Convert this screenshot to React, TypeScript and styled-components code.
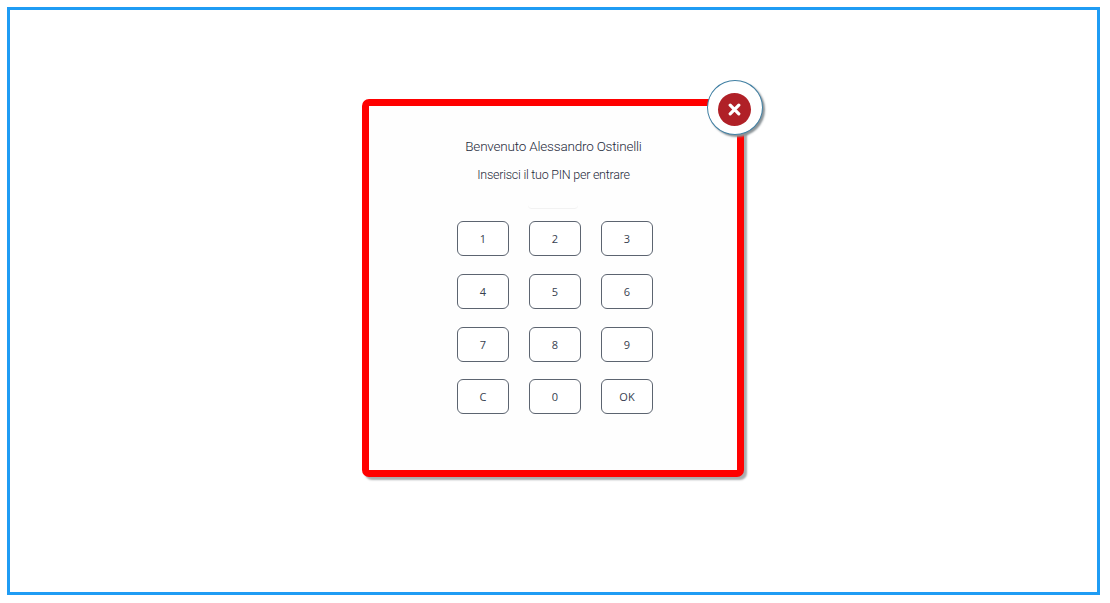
import styled, { createGlobalStyle } from 'styled-components';

const GlobalStyle = createGlobalStyle`
	html, body {
		margin: 0;
		padding: 0;
		background: #fff;
		font-family: Roboto, 'Noto Sans', sans-serif;
	}
`;

const Frame = styled.main`
	box-sizing: border-box;
	width: 1093px;
	height: 588px;
	margin: 7px 0 0 7px;
	padding: 89px 1px 0 0;
	border: 3px solid #1f9cf4;
	display: flex;
	justify-content: center;
	align-items: flex-start;
`;

const Card = styled.section`
	position: relative;
	box-sizing: border-box;
	width: 382px;
	height: 378px;
	border: 7px solid #ff0000;
	border-radius: 7px;
	background: #fefefe;
	box-shadow: 3px 3px 2px #a9acae;
	display: flex;
	flex-direction: column;
	align-items: center;
	padding-top: 30px;
	color: #4a5568;
`;

const Title = styled.h1`
	margin: 0 0 0 1px;
	font-size: 13.5px;
	line-height: 20px;
	font-weight: 300;
	letter-spacing: -0.2px;
	color: #1f2b3c;
`;

const Subtitle = styled.p`
	margin: 9px 0 0 1px;
	font-size: 12.5px;
	line-height: 20px;
	font-weight: 300;
	letter-spacing: -0.25px;
	color: #1f2b3c;
`;

const PinField = styled.div`
	width: 50px;
	height: 13px;
	margin-top: 10px;
	border-bottom: 1px solid #f2f2f2;
	border-radius: 0 0 4px 4px;
`;

const Keypad = styled.div`
	display: grid;
	grid-template-columns: repeat(3, 52px);
	grid-auto-rows: 35px;
	column-gap: 20px;
	row-gap: 17.8px;
	margin: 12px 0 0 4px;
`;

const Key = styled.button`
	box-sizing: border-box;
	padding: 0;
	border: 1px solid #5c6470;
	border-radius: 6px;
	background: #fff;
	font-family: 'Open Sans', 'Noto Sans', sans-serif;
	font-size: 11px;
	color: #37414f;
`;

const CloseButton = styled.button`
	position: absolute;
	top: -26px;
	right: -26px;
	box-sizing: border-box;
	width: 56px;
	height: 55px;
	padding: 4px 1px 0 0;
	border: 1px solid #3f7fa3;
	border-radius: 50%;
	background: #fff;
	box-shadow: 2px 2px 2px #8c9498;
	display: flex;
	align-items: center;
	justify-content: center;
`;

const CloseDisc = styled.span`
	width: 33px;
	height: 33px;
	border-radius: 50%;
	background: #b02027;
	display: flex;
	align-items: center;
	justify-content: center;
`;

const keys = ['1', '2', '3', '4', '5', '6', '7', '8', '9', 'C', '0', 'OK'];

const App = () => {
	return (
		<Frame>
			<GlobalStyle />
			<Card>
				<Title>Benvenuto Alessandro Ostinelli</Title>
				<Subtitle>Inserisci il tuo PIN per entrare</Subtitle>
				<PinField />
				<Keypad>
					{keys.map((k) => (
						<Key key={k}>{k}</Key>
					))}
				</Keypad>
				<CloseButton aria-label='Chiudi'>
					<CloseDisc>
						<svg width='13' height='13' viewBox='0 0 13 13'>
							<path d='M2.2 2.2 10.8 10.8M10.8 2.2 2.2 10.8' stroke='#fff' strokeWidth='3.2' strokeLinecap='round' />
						</svg>
					</CloseDisc>
				</CloseButton>
			</Card>
		</Frame>
	);
};

export default App;
